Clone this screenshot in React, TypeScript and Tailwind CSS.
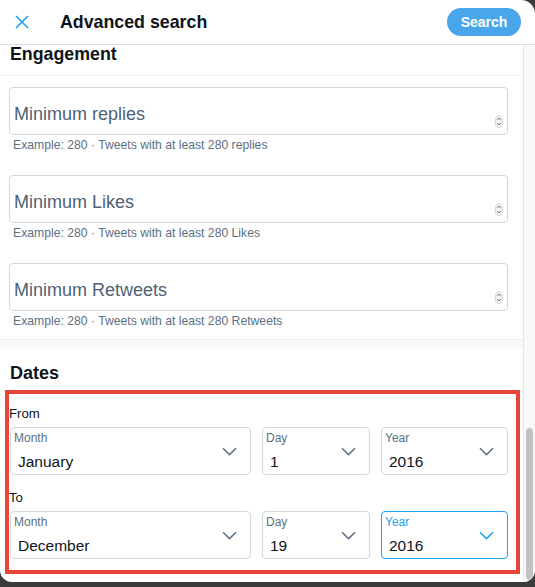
import React from "react";

const font = "font-['Liberation_Sans',Arial,sans-serif]";

const Spinner = () => (
  <svg width="8" height="13" viewBox="0 0 8 13" className="shrink-0">
    <rect x="0.5" y="0.5" width="7" height="12" rx="3.5" fill="#f2f2f2" stroke="#dadada" />
    <path d="M2.3 4.8 L4 3.1 L5.7 4.8" fill="none" stroke="#555" strokeWidth="0.9" />
    <path d="M2.3 8.2 L4 9.9 L5.7 8.2" fill="none" stroke="#555" strokeWidth="0.9" />
  </svg>
);

const Chevron = ({ color }: { color: string }) => (
  <svg width="15" height="9" viewBox="0 0 15 9" className="shrink-0">
    <path d="M1 1.2 L7.5 7.6 L14 1.2" fill="none" stroke={color} strokeWidth="1.5" />
  </svg>
);

const NumberField = ({ placeholder, hint }: { placeholder: string; hint: string }) => (
  <div className="mb-[22px]">
    <div className="ml-[9px] w-[499px] h-[48px] border border-[#cfd9de] rounded-[4px] flex pl-[4px] pr-[4px] pt-[16px]">
      <div className="flex-1 text-[18px] leading-[20px] text-[#4e6275]">{placeholder}</div>
      <div className="self-end mb-[6px]">
        <Spinner />
      </div>
    </div>
    <div className="mt-[2px] pl-[13px] text-[12.2px] leading-[16px] text-[#5b7083]">{hint}</div>
  </div>
);

const SelectBox = ({
  label,
  value,
  width,
  focused,
}: {
  label: string;
  value: string;
  width: string;
  focused?: boolean;
}) => (
  <div
    className={`${width} h-[48px] rounded-[4px] border flex items-stretch ${
      focused ? "border-[#1da1f2]" : "border-[#cfd9de]"
    }`}
  >
    <div className="flex-1 flex flex-col">
      <div
        className={`pl-[3px] pt-[3px] text-[12px] leading-[14px] ${
          focused ? "text-[#1da1f2]" : "text-[#5b7083]"
        }`}
      >
        {label}
      </div>
      <div className="pl-[7px] mt-[8px] text-[15.5px] leading-[18px] text-[#0f1419]">{value}</div>
    </div>
    <div className="self-center mr-[13px]">
      <Chevron color={focused ? "#1da1f2" : "#5b7083"} />
    </div>
  </div>
);

const DateRow = ({ month, day, year, focusYear }: { month: string; day: string; year: string; focusYear?: boolean }) => (
  <div className="flex ml-[1px] mt-[5px]">
    <SelectBox label="Month" value={month} width="w-[241px]" />
    <div className="ml-[11px]">
      <SelectBox label="Day" value={day} width="w-[108px]" />
    </div>
    <div className="ml-[11px]">
      <SelectBox label="Year" value={year} width="w-[127px]" focused={focusYear} />
    </div>
  </div>
);

export default function App() {
  return (
    <div className={`w-[535px] h-[587px] bg-[#3b3b3b] overflow-hidden ${font}`}>
      <div className="h-[582px] bg-white rounded-tr-[14px] rounded-b-[12px] overflow-hidden flex flex-col">
        {/* header */}
        <div className="h-[45px] shrink-0 border-b border-[#d8dde1] flex items-center">
          <svg width="14" height="14" viewBox="0 0 14 14" className="ml-[15px]">
            <path d="M1 1 L13 13 M13 1 L1 13" stroke="#1da1f2" strokeWidth="1.6" fill="none" />
          </svg>
          <div className="ml-[31px] text-[17.8px] leading-[20px] font-bold text-[#0f1419]">Advanced search</div>
          <button className="ml-auto mr-[14px] h-[28px] w-[74px] rounded-full bg-[#4aa6eb] text-white text-[14px] font-bold">
            Search
          </button>
        </div>

        <div className="flex flex-1 min-h-0">
          <div className="flex-1 overflow-hidden">
            <div className="h-[31px] border-b border-[#eff3f4] px-[10px]">
              <div className="text-[17.8px] leading-[18px] font-bold text-[#0f1419]">Engagement</div>
            </div>
            <div className="pt-[11px]">
              <NumberField placeholder="Minimum replies" hint="Example: 280 · Tweets with at least 280 replies" />
              <NumberField placeholder="Minimum Likes" hint="Example: 280 · Tweets with at least 280 Likes" />
              <NumberField placeholder="Minimum Retweets" hint="Example: 280 · Tweets with at least 280 Retweets" />
            </div>
            <div className="-mt-[12px] h-[10px] bg-[#f7f9fa] border-t border-[#eceff1]" />

            <div className="pt-[15px] px-[10px] text-[18px] leading-[18px] font-bold text-[#0f1419]">Dates</div>

            <div className="mt-[8px] ml-[5px] w-[515px] border-[4px] border-[#e8443a] pb-[11px]">
              <div className="pt-[12px] text-[13.2px] leading-[16px] text-[#0f1419]">From</div>
              <DateRow month="January" day="1" year="2016" />
              <div className="mt-[15px] text-[13.2px] leading-[16px] text-[#0f1419]">To</div>
              <DateRow month="December" day="19" year="2016" focusYear />
            </div>
          </div>

          {/* scrollbar */}
          <div className="w-[12px] shrink-0 bg-[#f8f8f8] border-l border-[#e6e6e6] flex flex-col justify-end items-center">
            <div className="w-[7px] h-[152px] rounded-full bg-[#c2c2c2] mb-[2px]" />
          </div>
        </div>
      </div>
    </div>
  );
}
